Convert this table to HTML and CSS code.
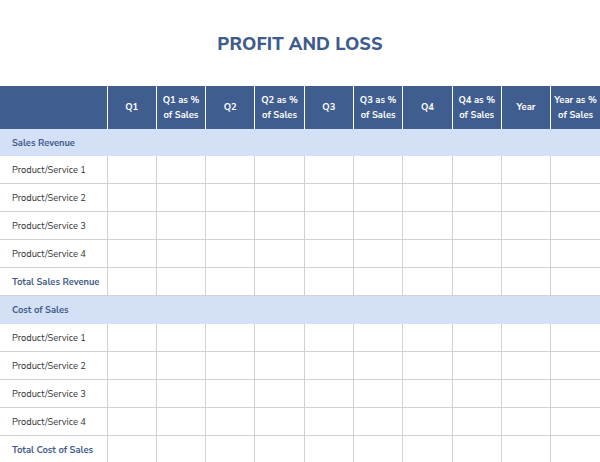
FILE: index.html
```html
<!DOCTYPE html>
<html>
<head>
<meta charset="utf-8">
<link rel="stylesheet" href="styles.css">
</head>
<body>
<div class="page">
  <h1 class="title">PROFIT AND LOSS</h1>
  <table class="pl">
    <colgroup>
      <col class="c-label">
      <col><col><col><col><col><col><col><col><col><col>
    </colgroup>
    <thead>
      <tr>
        <th></th>
        <th>Q1</th>
        <th>Q1 as %<br>of Sales</th>
        <th>Q2</th>
        <th>Q2 as %<br>of Sales</th>
        <th>Q3</th>
        <th>Q3 as %<br>of Sales</th>
        <th>Q4</th>
        <th>Q4 as %<br>of Sales</th>
        <th>Year</th>
        <th>Year as %<br>of Sales</th>
      </tr>
    </thead>
    <tbody>
      <tr class="section first"><td colspan="11">Sales Revenue</td></tr>
      <tr><td>Product/Service 1</td><td></td><td></td><td></td><td></td><td></td><td></td><td></td><td></td><td></td><td></td></tr>
      <tr><td>Product/Service 2</td><td></td><td></td><td></td><td></td><td></td><td></td><td></td><td></td><td></td><td></td></tr>
      <tr><td>Product/Service 3</td><td></td><td></td><td></td><td></td><td></td><td></td><td></td><td></td><td></td><td></td></tr>
      <tr><td>Product/Service 4</td><td></td><td></td><td></td><td></td><td></td><td></td><td></td><td></td><td></td><td></td></tr>
      <tr class="total"><td>Total Sales Revenue</td><td></td><td></td><td></td><td></td><td></td><td></td><td></td><td></td><td></td><td></td></tr>
      <tr class="section"><td colspan="11">Cost of Sales</td></tr>
      <tr><td>Product/Service 1</td><td></td><td></td><td></td><td></td><td></td><td></td><td></td><td></td><td></td><td></td></tr>
      <tr><td>Product/Service 2</td><td></td><td></td><td></td><td></td><td></td><td></td><td></td><td></td><td></td><td></td></tr>
      <tr><td>Product/Service 3</td><td></td><td></td><td></td><td></td><td></td><td></td><td></td><td></td><td></td><td></td></tr>
      <tr><td>Product/Service 4</td><td></td><td></td><td></td><td></td><td></td><td></td><td></td><td></td><td></td><td></td></tr>
      <tr class="total"><td>Total Cost of Sales</td><td></td><td></td><td></td><td></td><td></td><td></td><td></td><td></td><td></td><td></td></tr>
    </tbody>
  </table>
</div>
</body>
</html>
```
FILE: styles.css
```css
html, body {
  margin: 0;
  padding: 0;
  background: #ffffff;
}
body {
  font-family: "Nunito Sans", Lato, "Open Sans", sans-serif;
  width: 600px;
  overflow: hidden;
}
.page {
  width: 600px;
}
.title {
  margin: 0;
  height: 86px;
  line-height: 88px;
  text-align: center;
  font-size: 18px;
  font-weight: 800;
  color: #3f5c8c;
  letter-spacing: 0.1px;
}
.pl {
  width: 600px;
  border-collapse: collapse;
  table-layout: fixed;
}
.c-label {
  width: 107px;
}
.pl th {
  background: #3f5d8f;
  color: #ffffff;
  font-size: 9.4px;
  font-weight: 700;
  line-height: 15px;
  height: 43px;
  padding: 0;
  text-align: center;
  border-left: 1px solid #ffffff;
}
.pl th:first-child {
  border-left: none;
}
.pl td {
  height: 27px;
  padding: 0 0 0 12px;
  font-size: 9.3px;
  color: #333333;
  border-left: 1px solid #d2d2d2;
  border-bottom: 1px solid #d2d2d2;
  white-space: nowrap;
}
.pl td:first-child {
  border-left: none;
}
.pl .section td {
  background: #d3e0f5;
  color: #3f5c8c;
  font-weight: 700;
  border-bottom: none;
  height: 28px;
}
.pl .section.first td {
  height: 27px;
}
.pl .total td:first-child {
  color: #3f5c8c;
  font-weight: 700;
}
```
